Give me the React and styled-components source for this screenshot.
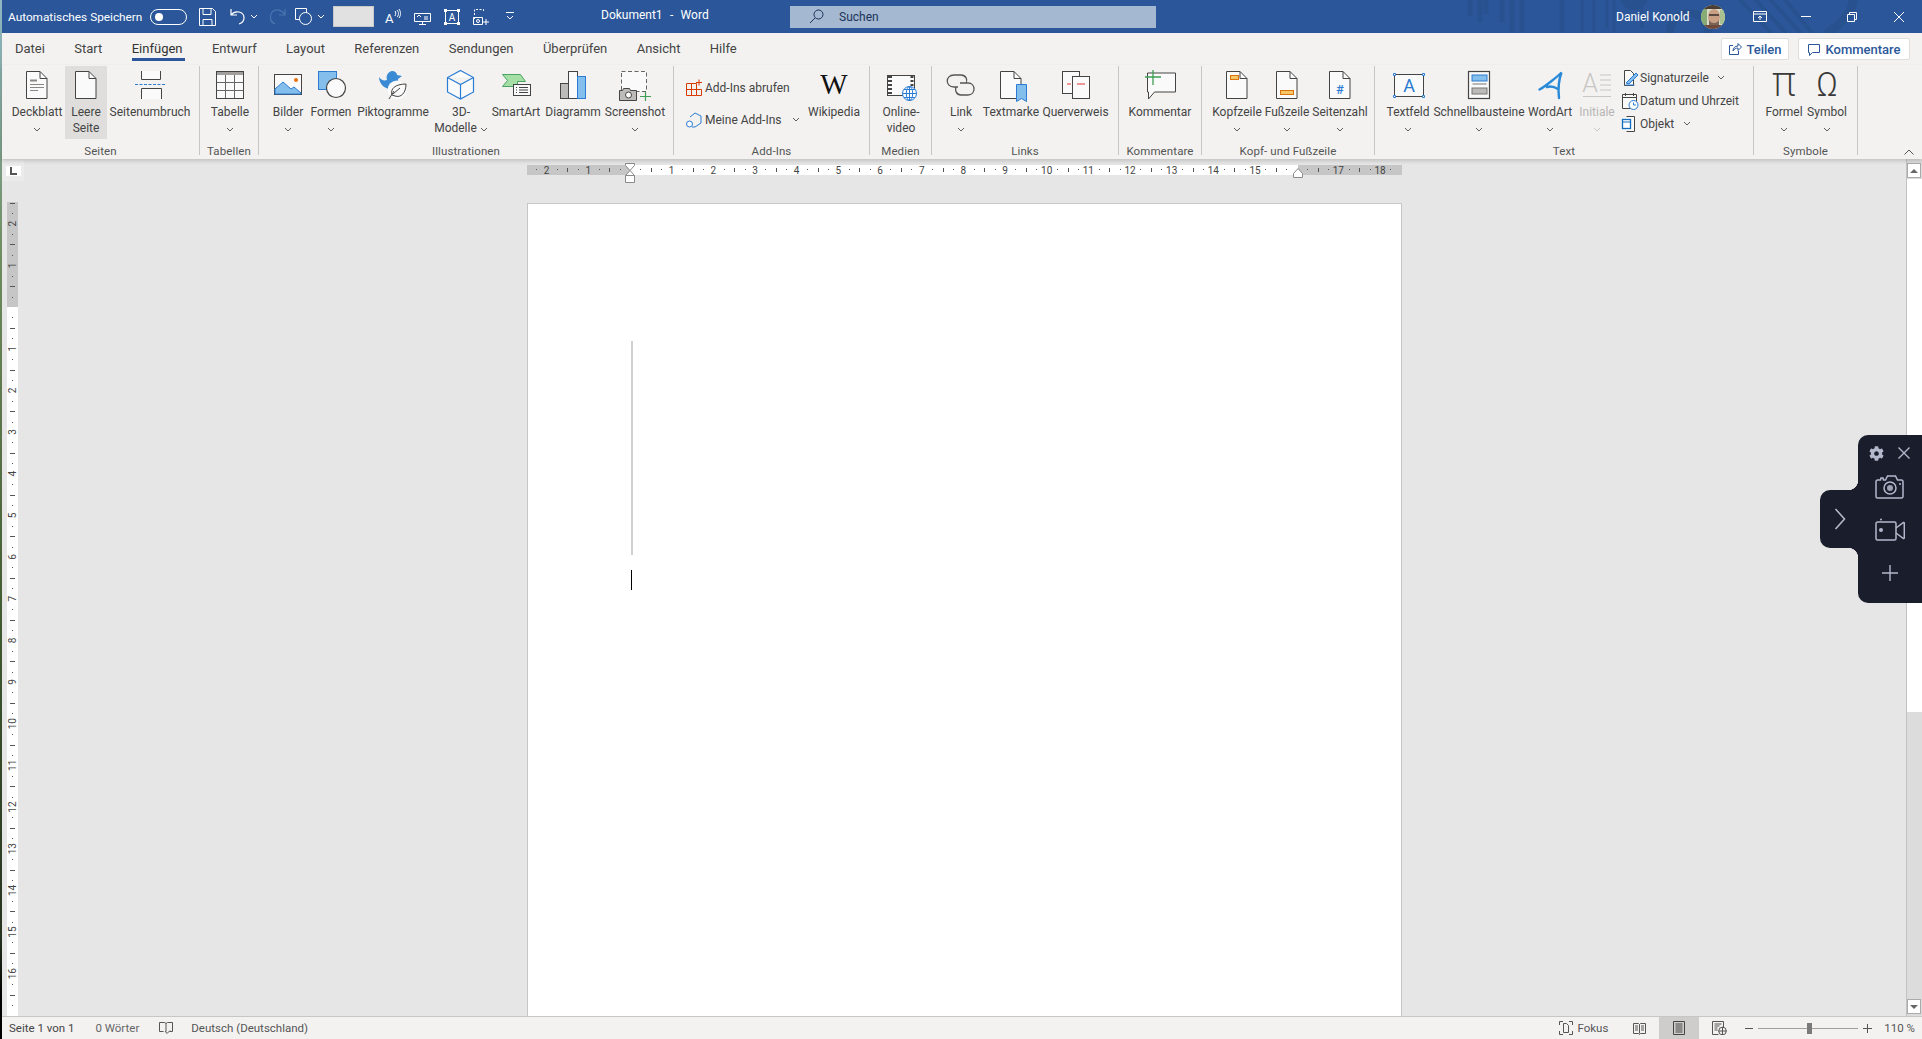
import React from "react"
import styled, { createGlobalStyle } from "styled-components"
import { FaCog } from "react-icons/fa"

const GlobalStyle = createGlobalStyle`
  html, body { margin: 0; padding: 0; height: 100%; overflow: hidden; background: #1e2a1c; }
  #root { height: 100%; }
  * { box-sizing: border-box; }
`

const DARK = "#444444"
const BLUE = "#2b7cd3"
const LBLUE = "#83beec"
const PAPER = "#fafafa"

const Screen = styled.div`
  display: flex;
  width: 1922px;
  height: 1039px;
  overflow: hidden;
  font-family: Roboto, "Noto Sans", sans-serif;
  font-size: 12px;
  color: ${DARK};
`

const DesktopEdge = styled.div`
  width: 2px;
  flex: none;
  background: linear-gradient(#8fb6c4 0, #6f8c5e 25%, #3f5a30 60%, #27331f 90%, #000 96%);
`

const Window = styled.div`
  flex: 1;
  display: flex;
  flex-direction: column;
  background: #f3f2f1;
  min-width: 0;
`

/* ---------- title bar ---------- */

const TitleBar = styled.div`
  position: relative;
  height: 33px;
  flex: none;
  display: flex;
  align-items: center;
  padding-left: 6px;
  padding-right: 18px;
  background: #2b579a;
  color: #fff;
  overflow: hidden;
`

const TitlePattern = styled.svg`
  position: absolute;
  left: 1460px;
  top: 0;
`

const AutoSave = styled.span`
  width: 134px;
  white-space: nowrap;
  font-size: 11.8px;
`

const Toggle = styled.span`
  position: relative;
  width: 37px;
  height: 16px;
  margin-left: 8px;
  border: 1px solid #fff;
  border-radius: 8px;
  &::after {
    content: "";
    position: absolute;
    left: 4px;
    top: 3px;
    width: 8px;
    height: 8px;
    border-radius: 50%;
    background: #fff;
  }
`

const Slot = styled.span`
  display: flex;
  align-items: center;
  flex: none;
  margin-left: ${p => p.$ml || 0}px;
  position: relative;
`

const QuickBox = styled.span`
  width: 41px;
  height: 21px;
  margin-left: ${p => p.$ml}px;
  background: #e1e1e1;
  border: 1px solid #c8c8c8;
`

const DocTitle = styled.span`
  width: 108px;
  margin-left: 87px;
  white-space: pre;
  font-size: 12px;
  word-spacing: 0.7px;
  margin-top: -3px;
`

const SearchBox = styled.div`
  width: 366px;
  height: 22px;
  margin-left: 81px;
  display: flex;
  align-items: center;
  gap: 15px;
  padding-left: 19px;
  background: #a4b8d2;
  color: #1b3358;
  font-size: 12px;
`

const UserArea = styled.div`
  display: flex;
  align-items: center;
  margin-left: auto;
  position: relative;
`

const UserName = styled.span`
  width: 74px;
  white-space: nowrap;
  font-size: 12px;
`

/* ---------- tabs ---------- */

const TabRow = styled.div`
  height: 32px;
  flex: none;
  display: flex;
  align-items: center;
  gap: 29.4px;
  padding-left: 13px;
  padding-right: 12px;
`

const Tab = styled.span`
  position: relative;
  top: -1px;
  font-size: 13px;
  color: ${p => (p.$active ? "#333" : DARK)};
  &::after {
    content: "";
    display: ${p => (p.$active ? "block" : "none")};
    position: absolute;
    left: 0;
    right: -2px;
    bottom: -5px;
    height: 3px;
    background: #2b579a;
  }
`

const TabActions = styled.div`
  margin-left: auto;
  display: flex;
  gap: 9px;
`

const ActionButton = styled.span`
  width: ${p => p.$w}px;
  height: 22px;
  display: flex;
  align-items: center;
  justify-content: center;
  gap: 4px;
  background: #fff;
  border: 1px solid #e1dfdd;
  border-radius: 2px;
  color: #2b579a;
  font-size: 13px;
  font-weight: 500;
`

/* ---------- ribbon ---------- */

const Ribbon = styled.div`
  position: relative;
  z-index: 2;
  height: 94px;
  flex: none;
  display: flex;
  padding-top: 1px;
  background: #f3f2f1;
  box-shadow: 0 2px 4px rgba(0, 0, 0, 0.16);
`

const GroupBox = styled.div`
  width: ${p => p.$w}px;
  height: 89px;
  flex: none;
  display: flex;
  flex-direction: column;
  border-right: 1px solid #c8c6c4;
`

const GroupItems = styled.div`
  height: 77px;
  flex: none;
  display: flex;
  padding-left: ${p => p.$pl || 0}px;
`

const GroupLabel = styled.div`
  height: 12px;
  line-height: 16px;
  font-size: 11.5px;
  text-align: center;
  letter-spacing: 0.1px;
  color: #555;
`

const BigButton = styled.div`
  width: ${p => p.$w}px;
  height: 73px;
  flex: none;
  display: flex;
  flex-direction: column;
  align-items: center;
  background: ${p => (p.$active ? "#dfdedc" : "transparent")};
  color: ${p => (p.$off ? "#b7b5b3" : DARK)};
`

const BigIcon = styled.div`
  width: 32px;
  height: 32px;
  margin-top: 3px;
  margin-bottom: 3px;
  flex: none;
`

const BigLine = styled.div`
  height: 16px;
  line-height: 16px;
  white-space: nowrap;
  text-align: center;
`

const SmallColumn = styled.div`
  display: flex;
  flex-direction: column;
  padding-top: ${p => p.$pt || 0}px;
  margin-top: ${p => p.$mt || 0}px;
  margin-left: ${p => p.$ml || 0}px;
  width: ${p => p.$w}px;
`

const SmallButton = styled.div`
  height: ${p => p.$h}px;
  display: flex;
  align-items: center;
  gap: ${p => p.$gap ?? 3}px;
  white-space: nowrap;
`

const SmallIcon = styled.span`
  width: 18px;
  height: 18px;
  flex: none;
  display: block;
`

const Chev = ({ ml = 0, color = "#605e5c" }) => (
  <svg width="8" height="5" viewBox="0 0 8 5" style={ml ? { marginLeft: ml } : undefined}>
    <path d="M1 1l3 3 3-3" fill="none" stroke={color} strokeWidth="1" />
  </svg>
)

const Ico = ({ children }) => (
  <svg width="32" height="32" viewBox="0 0 32 32" fill="none" strokeWidth="1" style={{ display: "block", overflow: "visible" }}>
    {children}
  </svg>
)

const Sheet = ({ x = 5.5 }) => (
  <>
    <path d={`M${x} 2.5H${x + 13.5}L${x + 20.5} 9.5V29.5H${x}Z`} fill={PAPER} stroke={DARK} />
    <path d={`M${x + 13.5} 2.5V9.5H${x + 20.5}`} stroke={DARK} />
  </>
)

/* ---------- ribbon icons ---------- */

const CoverIcon = () => (
  <Ico>
    <Sheet />
    <path d="M9 11.5h7" stroke="#8a8886" strokeWidth="2" />
    <path d="M9 15.5h14M9 18.5h14M9 21.5h8" stroke="#8a8886" />
  </Ico>
)

const BlankIcon = () => <Ico><Sheet /></Ico>

const BreakIcon = () => (
  <Ico>
    <path d="M9.5 2v8.5h19V2" transform="translate(-2 0)" stroke={DARK} fill={PAPER} />
    <path d="M1 15.5h30" stroke={BLUE} strokeDasharray="3 1.5" />
    <path d="M7.5 30V19.5h20V30" stroke={DARK} fill={PAPER} />
  </Ico>
)

const TableIcon = () => (
  <Ico>
    <rect x="2.5" y="2.5" width="27" height="27" fill={PAPER} stroke={DARK} />
    <rect x="3" y="3" width="26" height="3" fill="#a19f9d" />
    <path d="M11.5 6v23M20.5 6v23M3 13.5h26M3 21.5h26" stroke="#666" />
  </Ico>
)

const PictureIcon = () => (
  <Ico>
    <rect x="2.5" y="5.5" width="27" height="20" fill={PAPER} stroke={DARK} />
    <path d="M3 25V20l8-7 8 7 3-2 7 6v1z" fill={LBLUE} stroke={BLUE} />
    <circle cx="24" cy="11" r="2" fill="#e8700d" />
  </Ico>
)

const ShapesIcon = () => (
  <Ico>
    <rect x="3.5" y="2.5" width="18" height="18" fill={LBLUE} stroke={BLUE} />
    <circle cx="21" cy="19" r="9.5" fill={PAPER} stroke={DARK} strokeWidth="1.2" />
  </Ico>
)

const IconsIcon = () => (
  <Ico>
    <path d="M2 8c2 3 5 4 8 3-1-3 0-8 5-9 3 0 5 2 5 4l5 1-4 3c1 5-3 10-8 10C8 20 2 15 2 8z" fill="#3b8ad4" />
    <circle cx="20" cy="21" r="9.5" fill={PAPER} />
    <path d="M12 30l5-8M15 26c-2-6 3-11 14-11 0 9-5 14-11 12z" fill={PAPER} stroke={DARK} />
    <path d="M16 25l7-6" stroke={DARK} />
  </Ico>
)

const CubeIcon = () => (
  <Ico>
    <path d="M15.5 1.5L28.5 8.5V23L15.5 30 2.5 23V8.5zM2.5 8.5L15.5 15.5 28.5 8.5M15.5 15.5V30" stroke={BLUE} fill={PAPER} strokeWidth="1.2" />
  </Ico>
)

const SmartArtIcon = () => (
  <Ico>
    <path d="M2.5 5.5h18l5 7h-8v5h-15l5-6z" fill="#a6dfa6" stroke="#4aa564" />
    <rect x="13.5" y="15.5" width="17" height="11" fill={PAPER} stroke={DARK} />
    <path d="M16 18.5h1M19 18.5h9M16 21h1M19 21h9M16 23.5h1M19 23.5h9" stroke={DARK} />
  </Ico>
)

const ChartIcon = () => (
  <Ico>
    <rect x="3.5" y="14.5" width="8" height="15" fill="#bdbbb9" stroke={DARK} />
    <rect x="11.5" y="2.5" width="9" height="27" fill={PAPER} stroke={DARK} />
    <rect x="20.5" y="7.5" width="8" height="22" fill={LBLUE} stroke={BLUE} />
  </Ico>
)

const ScreenshotIcon = () => (
  <Ico>
    <rect x="2.5" y="2.5" width="25" height="20" fill={PAPER} stroke="#666" strokeDasharray="4 2.5" />
    <path d="M.5 31.5V21.5h3l1-2h6l1 2h6v10z" fill="#bdbbb9" stroke={DARK} />
    <circle cx="9.5" cy="26" r="3" fill={PAPER} stroke={DARK} />
    <path d="M26.5 23v9M21 27.5h11" stroke="#3f9f56" strokeWidth="1.2" />
  </Ico>
)

const WikiIcon = () => (
  <Ico>
    <text x="16" y="25" textAnchor="middle" fontFamily="'Liberation Serif', serif" fontSize="29" fill="#111">W</text>
  </Ico>
)

const VideoIcon = () => (
  <Ico>
    <rect x="2.5" y="6.5" width="27" height="20" fill={PAPER} stroke={DARK} />
    <path d="M5 7v19" stroke={DARK} strokeWidth="4" strokeDasharray="2 2" />
    <path d="M27 7v12" stroke={DARK} strokeWidth="3" strokeDasharray="2 2" />
    <circle cx="24.5" cy="24.5" r="7" fill="#fff" stroke={BLUE} />
    <path d="M17.5 24.5h14M24.5 17.5v14M19 20.5h11M19 28.5h11" stroke={BLUE} />
    <ellipse cx="24.5" cy="24.5" rx="3.2" ry="7" stroke={BLUE} />
  </Ico>
)

const LinkIcon = () => (
  <Ico>
    <path d="M13 18h-4c-9 0-9-12 0-12h7c5 0 7 5 5 8" stroke="#555" strokeWidth="1.3" />
    <path d="M15 14h8c8 0 8 12 0 12h-7c-5 0-6-5-5-8" stroke="#555" strokeWidth="1.3" />
  </Ico>
)

const BookmarkIcon = () => (
  <Ico>
    <Sheet />
    <path d="M21.5 15.5h10v17l-5-3-5 3z" fill={LBLUE} stroke={BLUE} />
  </Ico>
)

const CrossRefIcon = () => (
  <Ico>
    <rect x="2.5" y="2.5" width="17" height="22" fill={PAPER} stroke={DARK} />
    <rect x="12.5" y="7.5" width="17" height="22" fill={PAPER} stroke={DARK} />
    <path d="M7 15h4M17 15h8" stroke="#e0322d" />
  </Ico>
)

const CommentIcon = () => (
  <Ico>
    <path d="M3.5 3.5h28v19h-21l-6 7v-7h-1z" fill={PAPER} stroke={DARK} transform="translate(0 .5)" />
    <path d="M9 1v15M1 8h16" stroke="#3f9f56" strokeWidth="1.3" />
  </Ico>
)

const HeaderIcon = () => (
  <Ico>
    <Sheet />
    <rect x="9.5" y="6.5" width="8" height="4" fill="#f6c667" stroke="#d9730d" />
  </Ico>
)

const FooterIcon = () => (
  <Ico>
    <Sheet />
    <rect x="9.5" y="21.5" width="13" height="4" fill="#f6c667" stroke="#d9730d" />
  </Ico>
)

const PageNumIcon = () => (
  <Ico>
    <Sheet />
    <text x="16" y="25" textAnchor="middle" fontFamily="Roboto, sans-serif" fontSize="13" fontWeight="500" fill={BLUE}>#</text>
  </Ico>
)

const TextBoxIcon = () => (
  <Ico>
    <rect x="2.5" y="5.5" width="29" height="22" fill={PAPER} stroke={DARK} />
    <text x="17" y="23" textAnchor="middle" fontFamily="Roboto, sans-serif" fontSize="18" fill={BLUE}>A</text>
    <path d="M1.5 4.5h2v2h-2zM30.5 4.5h2v2h-2zM1.5 26.5h2v2h-2zM30.5 26.5h2v2h-2z" fill="#fff" stroke={BLUE} />
  </Ico>
)

const QuickPartsIcon = () => (
  <Ico>
    <rect x="5.5" y="2.5" width="21" height="27" fill={PAPER} stroke={DARK} strokeWidth="1.2" />
    <rect x="9" y="6" width="15" height="6" fill={LBLUE} stroke={BLUE} />
    <path d="M9.5 15h14" stroke="#777" />
    <rect x="9" y="19" width="15" height="6" fill="#bdbbb9" stroke="#777" />
  </Ico>
)

const WordArtIcon = () => (
  <Ico>
    <path d="M5.5 20.5C12 17 24 7 27.5 3.500 25 10 24 20 25 29M13 18c3-1 7-.5 11 2" stroke="#2b8ad8" strokeWidth="2.4" strokeLinecap="round" />
  </Ico>
)

const DropCapIcon = () => (
  <Ico>
    <text x="9" y="23" textAnchor="middle" fontFamily="Roboto, sans-serif" fontSize="25" fontWeight="300" fill="#c8c6c4">A</text>
    <path d="M19 6h11M19 11h11M19 16h11M19 21h11M2 27.500h28" stroke="#c8c6c4" />
  </Ico>
)

const PiIcon = () => (
  <Ico>
    <text x="16" y="27" textAnchor="middle" fontFamily="Inter, sans-serif" fontSize="42" fontWeight="200" fill="#3a3a3a">π</text>
  </Ico>
)

const OmegaIcon = () => (
  <Ico>
    <text x="16" y="27" textAnchor="middle" fontFamily="Roboto, sans-serif" fontSize="33" fontWeight="300" fill="#3a3a3a">Ω</text>
  </Ico>
)

const Small = ({ children }) => (
  <SmallIcon>
    <svg width="18" height="18" viewBox="0 0 18 18" fill="none" style={{ display: "block" }}>{children}</svg>
  </SmallIcon>
)

const AddInsIcon = () => (
  <Small>
    <path d="M1.500 4.500h10v12h-10zM1.500 10.500h15v6h-5M6.500 4.500v12" stroke="#d83b01" />
    <path d="M14 .5v6M11 3.500h6" stroke="#d83b01" />
  </Small>
)

const MyAddInsIcon = () => (
  <Small>
    <path d="M5 6l5-4 6 3v7l-6 4H7" stroke={BLUE} />
    <circle cx="4.500" cy="13" r="3" stroke={BLUE} fill={PAPER} />
  </Small>
)

const SignatureIcon = () => (
  <Small>
    <path d="M3.500 1.500h6l3 3v12h-9z" fill={PAPER} stroke={DARK} />
    <path d="M5 14L15 4l2 2L8 15z" fill={LBLUE} stroke={BLUE} />
    <path d="M4.500 16h9" stroke={BLUE} />
  </Small>
)

const DateIcon = () => (
  <Small>
    <path d="M1.500 2.500h14v14h-14zM1.500 5.500h14M4.500 1v3M12.500 1v3" stroke={DARK} fill={PAPER} />
    <circle cx="12.500" cy="13" r="4.500" fill="#fff" stroke={BLUE} />
    <path d="M12.500 10.500V13h2.500" stroke={BLUE} />
  </Small>
)

const ObjectIcon = () => (
  <Small>
    <path d="M5.500 1.500h8v15h-8" fill={PAPER} stroke={DARK} />
    <rect x="1.500" y="4.500" width="8" height="9" fill="#fff" stroke="#106ebe" strokeWidth="1.3" />
    <path d="M1.500 7h8" stroke="#106ebe" />
  </Small>
)

const Big = ({ w, icon, lines, chev, active, off }) => (
  <BigButton $w={w} $active={active} $off={off}>
    <BigIcon>{icon}</BigIcon>
    {lines.map((l, i) => <BigLine key={i}>{l}</BigLine>)}
    {chev && <BigLine><Chev color={off ? "#c8c6c4" : undefined} /></BigLine>}
  </BigButton>
)

const Group = ({ w, pl, label, children }) => (
  <GroupBox $w={w}>
    <GroupItems $pl={pl}>{children}</GroupItems>
    <GroupLabel>{label}</GroupLabel>
  </GroupBox>
)

/* ---------- rulers ---------- */

const Workarea = styled.div`
  flex: 1;
  min-height: 0;
  display: flex;
  background: #e6e6e6;
  overflow: hidden;
`

const Gutter = styled.div`
  width: 24px;
  flex: none;
  display: flex;
  flex-direction: column;
`

const CornerBox = styled.div`
  width: 22px;
  height: 21px;
  margin-top: 1px;
  flex: none;
  display: flex;
  align-items: center;
  justify-content: center;
  background: #ebebeb;
`

const CornerKey = styled.div`
  width: 15px;
  height: 10px;
  display: flex;
  align-items: center;
  justify-content: center;
  background: #fff;
  &::before {
    content: "";
    width: 5px;
    height: 6px;
    border-left: 2px solid #555;
    border-bottom: 2px solid #555;
  }
`

const VRulerWrap = styled.div`
  margin-top: 21px;
  margin-left: 5px;
  width: 11px;
  flex: none;
`

const Middle = styled.div`
  flex: 1;
  min-width: 0;
  padding-left: 501px;
  display: flex;
  flex-direction: column;
`

const HRulerWrap = styled.div`
  position: relative;
  width: 875px;
  height: 10px;
  margin-top: 6px;
  flex: none;
`

const Marker = styled.svg`
  position: absolute;
  left: ${p => p.$x}px;
  top: ${p => p.$y}px;
`

const Page = styled.div`
  width: 875px;
  height: 1200px;
  margin-top: 28px;
  flex: none;
  padding: 137px 0 0 103px;
  background: #fff;
  border: 1px solid #c6c6c6;
`

const MarginMark = styled.div`
  width: 2px;
  height: 214px;
  background: #d2d2d2;
`

const Caret = styled.div`
  width: 1px;
  height: 20px;
  margin-top: 15px;
  background: #000;
`

const HRuler = () => {
  const cm = 41.67
  const origin = 103
  const right = 771
  const nums = [[-2, 2], [-1, 1]]
  for (let i = 1; i <= 18; i++) if (i !== 16) nums.push([i, i])
  const marks = []
  for (let i = -3; i <= 18; i++) {
    const x = origin + i * cm
    ;[0.25, 0.5, 0.75].forEach(f => {
      const mx = x + f * cm
      if (mx > 0 && mx < 872) marks.push(<rect key={`${i}${f}`} x={Math.round(mx)} y={f === 0.5 ? 3 : 4} width="1" height={f === 0.5 ? 4 : 1} fill="#555" />)
    })
  }
  return (
    <svg width="875" height="10" style={{ display: "block" }}>
      <rect width="875" height="10" fill="#c6c6c6" />
      <rect x={origin} width={right - origin} height="10" fill="#fff" />
      {marks}
      {nums.map(([p, l]) => (
        <text key={p} x={origin + p * cm} y="8.500" textAnchor="middle" fontFamily="Roboto, sans-serif" fontSize="10" fill="#444">{l}</text>
      ))}
    </svg>
  )
}

const VRuler = () => {
  const cm = 41.67
  const origin = 105
  const items = []
  for (let i = -3; i <= 17; i++) {
    const y = origin + i * cm
    ;[0.25, 0.5, 0.75].forEach(f => {
      const my = y + f * cm
      if (my > 0 && my < 814) items.push(<rect key={`${i}${f}`} x={f === 0.5 ? 3 : 5} y={Math.round(my)} width={f === 0.5 ? 5 : 1} height="1" fill="#555" />)
    })
    if (i !== 0 && i > -3 && i < 17) {
      items.push(
        <text key={i} transform={`translate(9 ${y}) rotate(-90)`} textAnchor="middle" fontFamily="Roboto, sans-serif" fontSize="10" fill="#444">{Math.abs(i)}</text>
      )
    }
  }
  return (
    <svg width="11" height="814" style={{ display: "block" }}>
      <rect width="11" height="814" fill="#fff" />
      <rect width="11" height="105" fill="#c6c6c6" />
      {items}
    </svg>
  )
}

/* ---------- scrollbar ---------- */

const ScrollBar = styled.div`
  width: 16px;
  flex: none;
  display: flex;
  flex-direction: column;
  padding-top: 4px;
  padding-bottom: 2px;
  background: #dcdcdc;
  border-left: 1px solid #c2c2c2;
`

const ScrollButton = styled.div`
  width: 14px;
  height: 15px;
  flex: none;
  display: flex;
  align-items: center;
  justify-content: center;
  background: #fff;
  border: 1px solid #ababab;
  &::before {
    content: "";
    border-left: 4px solid transparent;
    border-right: 4px solid transparent;
    ${p => (p.$up ? "border-bottom" : "border-top")}: 4px solid #666;
  }
`

const ScrollThumb = styled.div`
  width: 15px;
  height: 533px;
  margin-top: 1px;
  flex: none;
  background: #fff;
`

const ScrollGap = styled.div`
  flex: 1;
`

/* ---------- status bar ---------- */

const StatusBar = styled.div`
  height: 23px;
  flex: none;
  display: flex;
  align-items: center;
  padding-left: 7px;
  border-top: 1px solid #c6c6c6;
  background: #f3f2f1;
  font-size: 11.5px;
  position: relative;
  z-index: 2;
`

const StatusText = styled.span`
  margin-left: ${p => p.$ml || 0}px;
  color: ${p => p.$c || "#555"};
  white-space: nowrap;
`

const StatusIcon = styled.svg`
  margin-left: ${p => p.$ml || 0}px;
  flex: none;
  display: block;
`

const ViewHighlight = styled.span`
  width: 40px;
  height: 22px;
  margin-left: ${p => p.$ml}px;
  display: flex;
  align-items: center;
  justify-content: center;
  background: #cfcdcb;
`

const StatusRight = styled.div`
  margin-left: auto;
  display: flex;
  align-items: center;
  height: 100%;
  padding-right: 7px;
`

const ZoomSlider = styled.div`
  position: relative;
  width: 100px;
  height: 1px;
  margin-left: 5px;
  background: #a19f9d;
  &::after {
    content: "";
    position: absolute;
    left: 49px;
    top: -5px;
    width: 5px;
    height: 11px;
    background: #7a7a7a;
  }
`

/* ---------- floating capture panel ---------- */

const CaptureDock = styled.div`
  position: fixed;
  right: 0;
  top: 435px;
  width: 64px;
  height: 168px;
  z-index: 5;
  padding-top: 8px;
  display: flex;
  flex-direction: column;
  align-items: center;
  background: #1a1d2b;
  border-radius: 10px 0 0 10px;
`

const DockTab = styled.div`
  position: absolute;
  left: -38px;
  top: 55px;
  width: 38px;
  height: 58px;
  display: flex;
  align-items: center;
  padding-left: 14px;
  background: #1a1d2b;
  border-radius: 10px 0 0 10px;
  &::before, &::after {
    content: "";
    position: absolute;
    right: 0;
    width: 10px;
    height: 10px;
  }
  &::before {
    top: -10px;
    background: radial-gradient(circle at 0 0, transparent 10px, #1a1d2b 10.5px);
  }
  &::after {
    bottom: -10px;
    background: radial-gradient(circle at 0 100%, transparent 10px, #1a1d2b 10.5px);
  }
`

const DockTop = styled.div`
  display: flex;
  align-items: center;
  gap: 14px;
  height: 20px;
  margin-left: -1px;
  color: #b4b8cc;
`

const DockIcon = styled.div`
  margin-top: ${p => p.$mt}px;
  line-height: 0;
`

const DOCK = "#b4b8cc"

const DockPanel = () => (
  <CaptureDock>
    <DockTab>
      <svg width="12" height="22" viewBox="0 0 12 22" fill="none"><path d="M1.500 1l9 10-9 10" stroke={DOCK} strokeWidth="1.600" /></svg>
    </DockTab>
    <DockTop>
      <FaCog size={15} />
      <svg width="12" height="12" viewBox="0 0 12 12" fill="none"><path d="M.5.500l11 11M11.500.500l-11 11" stroke={DOCK} strokeWidth="1.400" /></svg>
    </DockTop>
    <DockIcon $mt={12}>
      <svg width="30" height="24" viewBox="0 0 30 24" fill="none" stroke={DOCK} strokeWidth="1.500">
        <path d="M2.500 5h3l.5-2h2l.5 2h2l2-4h8l2 4h4a1.500 1.500 0 0 1 1.500 1.500v15a1.500 1.500 0 0 1-1.500 1.500h-24A1.500 1.500 0 0 1 1 21.500v-15A1.500 1.500 0 0 1 2.500 5z" />
        <circle cx="15" cy="13" r="6" />
        <circle cx="15" cy="13" r="3" fill={DOCK} stroke="none" opacity=".85" />
        <circle cx="25" cy="9" r="1" fill={DOCK} stroke="none" />
      </svg>
    </DockIcon>
    <DockIcon $mt={19}>
      <svg width="30" height="23" viewBox="0 0 30 23" fill="none" stroke={DOCK} strokeWidth="1.500">
        <path d="M2.500 4h17A1.500 1.500 0 0 1 21 5.500v15a1.500 1.500 0 0 1-1.500 1.500h-17A1.500 1.500 0 0 1 1 20.500v-15A1.500 1.500 0 0 1 2.500 4z" />
        <path d="M21 10l7.500-5.500a.6.600 0 0 1 .8.500v15a.6.600 0 0 1-.8.500L21 15" />
        <circle cx="6" cy="1.500" r="1" fill={DOCK} stroke="none" />
        <circle cx="6" cy="12" r="2" fill={DOCK} stroke="none" />
      </svg>
    </DockIcon>
    <DockIcon $mt={24}>
      <svg width="16" height="16" viewBox="0 0 16 16" fill="none" stroke={DOCK} strokeWidth="1.400"><path d="M8 0v16M0 8h16" /></svg>
    </DockIcon>
  </CaptureDock>
)

/* ---------- page ---------- */

export default function App() {
  return (
    <Screen>
      <GlobalStyle />
      <DesktopEdge />
      <Window>
        <TitleBar>
          <TitlePattern width="400" height="33" viewBox="0 0 400 33" fill="none" stroke="#28518f">
            <path d="M8 0v16M18 0v22M24 0v14M40 0v22M50 0v32M60 0v32M100 0v32" strokeWidth="5" />
            <path d="M120 0v32M132 0v32M145 0v28M152 0v32M180 0v28" strokeWidth="3" />
            <circle cx="172" cy="-4" r="14" fill="#28518f" stroke="none" />
            <circle cx="227" cy="32" r="19" strokeWidth="8" />
            <path d="M275 -4l34 37M290 -4l34 37M305 -4l34 37M320 -4l30 37" strokeWidth="4" />
            <path d="M390 -10c6 20-10 34-26 44" strokeWidth="9" />
          </TitlePattern>
          <AutoSave>Automatisches Speichern</AutoSave>
          <Toggle />
          <Slot $ml={12}>
            <svg width="17" height="18" viewBox="0 0 17 18" fill="none" stroke="#fff"><path d="M.5.500h13l3 3v14H.5zM4 .5v6h8v-6M4 17.500v-6h9v6" /></svg>
          </Slot>
          <Slot $ml={14}>
            <svg width="15" height="17" viewBox="0 0 15 17" fill="none" stroke="#fff" strokeWidth="1.200"><path d="M1 1v6h6M1 7c4-5 13-4 13 3 0 3-2 5-5 6" /></svg>
          </Slot>
          <Slot $ml={5}><Chev color="#fff" /></Slot>
          <Slot $ml={11}>
            <svg width="17" height="17" viewBox="0 0 17 17" fill="none" stroke="#4a74b0" strokeWidth="1.200"><path d="M16 1v6h-6M16 7C13 2 7 0 3 4c-3 4-2 10 3 12" /></svg>
          </Slot>
          <Slot $ml={9}>
            <svg width="17" height="17" viewBox="0 0 17 17" fill="none" stroke="#fff"><path d="M.5.500h11v4M.5.500v11h4" /><circle cx="10.500" cy="10.500" r="6" /></svg>
          </Slot>
          <Slot $ml={5}><Chev color="#fff" /></Slot>
          <QuickBox $ml={8} />
          <Slot $ml={11}>
            <svg width="16" height="17" viewBox="0 0 16 17" fill="none" stroke="#fff" style={{ overflow: "visible" }}>
              <text x="0" y="15" fontFamily="Roboto, sans-serif" fontSize="13" fill="#fff" stroke="none">A</text>
              <path d="M10 3c1 1 1 3 0 5M12 2c2 2 2 5 0 7M14 1c2 3 2 6 0 9" />
            </svg>
          </Slot>
          <Slot $ml={13}>
            <svg width="17" height="16" viewBox="0 0 17 16" fill="none" stroke="#fff"><path d="M.5 4.500h16v8H.5zM5 15.500h7M8.500 12.500v3M3 8l2-2 2 2M10 8h4M10 10h4" /></svg>
          </Slot>
          <Slot $ml={13}>
            <svg width="16" height="16" viewBox="0 0 16 16" fill="none" stroke="#fff">
              <rect x="1.500" y="1.500" width="13" height="13" />
              <path d="M0 0h3v3H0zM13 0h3v3h-3zM0 13h3v3H0zM13 13h3v3h-3z" fill="#fff" stroke="none" />
              <text x="8" y="12" textAnchor="middle" fontFamily="Roboto, sans-serif" fontSize="10" fill="#fff" stroke="none">A</text>
            </svg>
          </Slot>
          <Slot $ml={13}>
            <svg width="16" height="17" viewBox="0 0 16 17" fill="none" stroke="#fff">
              <path d="M1.500 7V1.500h9V4M1.500 9v2" strokeDasharray="2 1.500" />
              <path d="M.5 9.500h9v7h-9z" />
              <circle cx="5" cy="13" r="1.500" />
              <path d="M13 11v6M10 14h6" />
            </svg>
          </Slot>
          <Slot $ml={17}>
            <svg width="8" height="9" viewBox="0 0 8 9" fill="none" stroke="#fff"><path d="M0 .5h8M1 4l3 3 3-3" /></svg>
          </Slot>
          <DocTitle>{"Dokument1  -  Word"}</DocTitle>
          <SearchBox>
            <svg width="15" height="15" viewBox="0 0 15 15" fill="none" stroke="#1b3358"><circle cx="9.500" cy="5.500" r="4.500" /><path d="M6 9l-5 5" /></svg>
            Suchen
          </SearchBox>
          <UserArea>
            <UserName>Daniel Konold</UserName>
            <Slot $ml={11}>
              <svg width="24" height="24" viewBox="0 0 24 24">
                <defs><clipPath id="ava"><circle cx="12" cy="12" r="12" /></clipPath></defs>
                <g clipPath="url(#ava)">
                  <rect width="24" height="24" fill="#d8dcc8" />
                  <rect width="6" height="24" fill="#86ab74" />
                  <rect x="19" y="5" width="5" height="14" fill="#a9c08f" />
                  <rect y="0" width="24" height="4" fill="#4a3d35" />
                  <ellipse cx="13" cy="12" rx="6" ry="8" fill="#c9a084" />
                  <rect x="8" y="9" width="10" height="2" fill="#5a4a42" />
                  <path d="M8 15c2 4 8 4 10 0v5H8z" fill="#7b6558" />
                  <rect y="20" width="24" height="4" fill="#6d4a3c" />
                </g>
              </svg>
            </Slot>
            <Slot $ml={28}>
              <svg width="14" height="11" viewBox="0 0 14 11" fill="none" stroke="#fff"><path d="M.5.500h13v10H.5zM.5 3h13M7 9V5M5 7l2-2 2 2" /></svg>
            </Slot>
            <Slot $ml={34}>
              <svg width="10" height="1" viewBox="0 0 10 1"><rect width="10" height="1" fill="#fff" /></svg>
            </Slot>
            <Slot $ml={36}>
              <svg width="10" height="10" viewBox="0 0 10 10" fill="none" stroke="#fff"><path d="M.5 2.500h7v7h-7zM2.500 2.500v-2h7v7h-2" /></svg>
            </Slot>
            <Slot $ml={37}>
              <svg width="10" height="10" viewBox="0 0 10 10" fill="none" stroke="#fff"><path d="M0 0l10 10M10 0L0 10" /></svg>
            </Slot>
          </UserArea>
        </TitleBar>

        <TabRow>
          <Tab>Datei</Tab>
          <Tab>Start</Tab>
          <Tab $active>Einfügen</Tab>
          <Tab>Entwurf</Tab>
          <Tab>Layout</Tab>
          <Tab>Referenzen</Tab>
          <Tab>Sendungen</Tab>
          <Tab>Überprüfen</Tab>
          <Tab>Ansicht</Tab>
          <Tab>Hilfe</Tab>
          <TabActions>
            <ActionButton $w={68}>
              <svg width="14" height="14" viewBox="0 0 14 14" fill="none" stroke="#2b579a"><path d="M5 3.500H1.500v9h9V9M5 9c0-3 2-5 5-5V1.500L13.500 5 10 8.500V6C8 6 6 7 5 9z" /></svg>
              Teilen
            </ActionButton>
            <ActionButton $w={112}>
              <svg width="14" height="14" viewBox="0 0 14 14" fill="none" stroke="#2b579a"><path d="M1.500 2.500h11v8h-7l-3 3v-3h-1z" /></svg>
              Kommentare
            </ActionButton>
          </TabActions>
        </TabRow>

        <Ribbon>
          <Group w={198} pl={7} label="Seiten">
            <Big w={56} icon={<CoverIcon />} lines={["Deckblatt"]} chev />
            <Big w={42} icon={<BlankIcon />} lines={["Leere", "Seite"]} active />
            <Big w={86} icon={<BreakIcon />} lines={["Seitenumbruch"]} />
          </Group>
          <Group w={59} pl={1} label="Tabellen">
            <Big w={58} icon={<TableIcon />} lines={["Tabelle"]} chev />
          </Group>
          <Group w={415} pl={9} label="Illustrationen">
            <Big w={40} icon={<PictureIcon />} lines={["Bilder"]} chev />
            <Big w={46} icon={<ShapesIcon />} lines={["Formen"]} chev />
            <Big w={78} icon={<IconsIcon />} lines={["Piktogramme"]} />
            <Big w={58} icon={<CubeIcon />} lines={["3D-", <React.Fragment key="m">Modelle <Chev /></React.Fragment>]} />
            <Big w={52} icon={<SmartArtIcon />} lines={["SmartArt"]} />
            <Big w={62} icon={<ChartIcon />} lines={["Diagramm"]} />
            <Big w={62} icon={<ScreenshotIcon />} lines={["Screenshot"]} chev />
          </Group>
          <Group w={196} pl={11} label="Add-Ins">
            <SmallColumn $pt={5.5} $w={123}>
              <SmallButton $h={32} $gap={2}><AddInsIcon />Add-Ins abrufen</SmallButton>
              <SmallButton $h={32} $gap={2}><MyAddInsIcon />Meine Add-Ins<Chev ml={8} /></SmallButton>
            </SmallColumn>
            <Big w={52} icon={<WikiIcon />} lines={["Wikipedia"]} />
          </Group>
          <Group w={62} pl={1} label="Medien">
            <Big w={60} icon={<VideoIcon />} lines={["Online-", "video"]} />
          </Group>
          <Group w={187} pl={6} label="Links">
            <Big w={46} icon={<LinkIcon />} lines={["Link"]} chev />
            <Big w={54} icon={<BookmarkIcon />} lines={["Textmarke"]} />
            <Big w={75} icon={<CrossRefIcon />} lines={["Querverweis"]} />
          </Group>
          <Group w={83} pl={0} label="Kommentare">
            <Big w={82} icon={<CommentIcon />} lines={["Kommentar"]} />
          </Group>
          <Group w={173} pl={11} label="Kopf- und Fußzeile">
            <Big w={48} icon={<HeaderIcon />} lines={["Kopfzeile"]} chev />
            <Big w={52} icon={<FooterIcon />} lines={["Fußzeile"]} chev />
            <Big w={54} icon={<PageNumIcon />} lines={["Seitenzahl"]} chev />
          </Group>
          <Group w={379} pl={9} label="Text">
            <Big w={48} icon={<TextBoxIcon />} lines={["Textfeld"]} chev />
            <Big w={94} icon={<QuickPartsIcon />} lines={["Schnellbausteine"]} chev />
            <Big w={48} icon={<WordArtIcon />} lines={["WordArt"]} chev />
            <Big w={46} icon={<DropCapIcon />} lines={["Initiale"]} chev off />
            <SmallColumn $mt={0} $ml={1} $w={130}>
              <SmallButton $h={23} $gap={1}><SignatureIcon />Signaturzeile<Chev ml={7} /></SmallButton>
              <SmallButton $h={23} $gap={1}><DateIcon />Datum und Uhrzeit</SmallButton>
              <SmallButton $h={23} $gap={1}><ObjectIcon />Objekt<Chev ml={8} /></SmallButton>
            </SmallColumn>
          </Group>
          <Group w={104} pl={8} label="Symbole">
            <Big w={44} icon={<PiIcon />} lines={["Formel"]} chev />
            <Big w={42} icon={<OmegaIcon />} lines={["Symbol"]} chev />
          </Group>
          <Slot $ml={46}>
            <svg width="10" height="6" viewBox="0 0 10 6" fill="none" stroke="#555" style={{ marginTop: 79 }}><path d="M.5 5.500L5 1l4.500 4.500" /></svg>
          </Slot>
        </Ribbon>

        <Workarea>
          <Gutter>
            <CornerBox><CornerKey /></CornerBox>
            <VRulerWrap><VRuler /></VRulerWrap>
          </Gutter>
          <Middle>
            <HRulerWrap>
              <HRuler />
              <Marker $x={98} $y={-2} width="10" height="21" viewBox="0 0 10 21" fill="#fff" stroke="#8a8a8a">
                <path d="M.5.500h9v2L5 7.500.5 2.500zM5 7.500l4.500 5H.5zM.5 12.500h9v7h-9z" />
              </Marker>
              <Marker $x={766} $y={3} width="10" height="10" viewBox="0 0 10 10" fill="#fff" stroke="#8a8a8a">
                <path d="M5 .5l4.500 5v4H.5v-4z" />
              </Marker>
            </HRulerWrap>
            <Page>
              <MarginMark />
              <Caret />
            </Page>
          </Middle>
          <ScrollBar>
            <ScrollButton $up />
            <ScrollThumb />
            <ScrollGap />
            <ScrollButton />
          </ScrollBar>
        </Workarea>

        <StatusBar>
          <StatusText $c="#444">Seite 1 von 1</StatusText>
          <StatusText $ml={21} $c="#666">0 Wörter</StatusText>
          <StatusIcon $ml={20} width="14" height="14" viewBox="0 0 14 14" fill="none" stroke="#555"><path d="M.5 1.500h5l1.500 1 1.500-1h5v9h-3M7 2.500v8M.5 1.500v9h4" /><path d="M6 10l2 2.500 3-3" /></StatusIcon>
          <StatusText $ml={18}>Deutsch (Deutschland)</StatusText>
          <StatusRight>
            <StatusIcon width="14" height="14" viewBox="0 0 14 14" fill="none" stroke="#555"><path d="M.5 4V.5H4M10 .5h3.500V4M.5 10v3.500H4M10 13.500h3.500V10M4.500 2.500h3l2 2v7h-5z" /></StatusIcon>
            <StatusText $ml={4}>Fokus</StatusText>
            <StatusIcon $ml={25} width="13" height="13" viewBox="0 0 13 13" fill="none" stroke="#555"><path d="M.5 1.500h5l1 1 1-1h5v10h-5l-1 1-1-1h-5zM6.500 2.500v9M2 4h3M2 6h3M2 8h3M8 4h3M8 6h3M8 8h3" /></StatusIcon>
            <ViewHighlight $ml={13}>
              <svg width="12" height="14" viewBox="0 0 12 14" fill="none" stroke="#444"><path d="M.5.500h11v13H.5zM2.500 3h7M2.500 5h7M2.500 7h7M2.500 9h7M2.500 11h7" /></svg>
            </ViewHighlight>
            <StatusIcon $ml={13} width="15" height="14" viewBox="0 0 15 14" fill="none" stroke="#555"><path d="M.5.500h11v6M.5.500v13h6M2.500 3h7M2.500 5h5M2.500 7h3M2.500 9h3" /><circle cx="10.500" cy="10" r="3.800" /><path d="M6.500 10h8M10.500 6v8" /></StatusIcon>
            <StatusIcon $ml={18} width="8" height="1" viewBox="0 0 8 1"><rect width="8" height="1" fill="#555" /></StatusIcon>
            <ZoomSlider />
            <StatusIcon $ml={5} width="9" height="9" viewBox="0 0 9 9" stroke="#555"><path d="M4.500 0v9M0 4.500h9" /></StatusIcon>
            <StatusText $ml={12}>110 %</StatusText>
          </StatusRight>
        </StatusBar>
      </Window>
      <DockPanel />
    </Screen>
  )
}
